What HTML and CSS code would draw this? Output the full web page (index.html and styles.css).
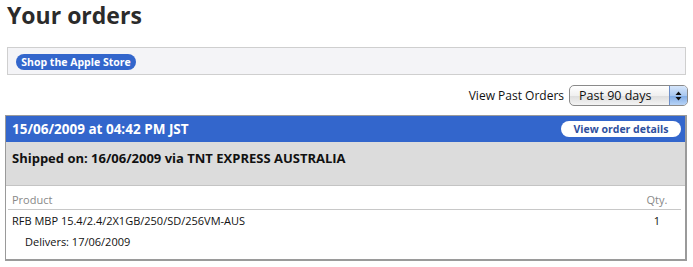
FILE: index.html
```html
<!DOCTYPE html>
<html lang="en">
<head>
  <meta charset="UTF-8">
  <title>Your orders</title>
  <link rel="stylesheet" href="styles.css">
</head>
<body>
  <div class="page">
    <h1>Your orders</h1>

    <div class="shop-bar">
      <a class="pill pill-blue" href="#">Shop the Apple Store</a>
    </div>

    <div class="filter">
      <label for="period">View Past Orders</label>
      <div class="popup" id="period">
        <span class="popup-value">Past 90 days</span>
        <span class="popup-arrows">
          <svg width="7" height="10" viewBox="0 0 7 10">
            <path d="M3.5 0.5 L6.5 4 L0.5 4 Z M0.5 6 L6.5 6 L3.5 9.5 Z" fill="#111"/>
          </svg>
        </span>
      </div>
    </div>

    <div class="order">
      <div class="order-head">
        <span class="order-date">15/06/2009 at 04:42 PM JST</span>
        <a class="pill pill-white" href="#">View order details</a>
      </div>
      <div class="shipment">
        Shipped on: 16/06/2009 via TNT EXPRESS AUSTRALIA
      </div>
      <div class="items">
        <div class="items-head">
          <span>Product</span>
          <span class="qty">Qty.</span>
        </div>
        <div class="item">
          <span>RFB MBP 15.4/2.4/2X1GB/250/SD/256VM-AUS</span>
          <span class="qty">1</span>
        </div>
        <div class="delivers">Delivers: 17/06/2009</div>
      </div>
    </div>
  </div>
</body>
</html>
```

FILE: styles.css
```css
* {
  margin: 0;
  padding: 0;
  box-sizing: border-box;
}

body {
  font-family: "Open Sans", "DejaVu Sans", sans-serif;
  background-color: #ffffff;
  color: #111;
}

.page {
  width: 686px;
  padding-left: 5px;
}

h1 {
  font-size: 23px;
  font-weight: bold;
  color: #2b2b2b;
  line-height: 30px;
  padding-left: 2px;
  margin-bottom: 17px;
}

.shop-bar {
  margin-left: 2px;
  width: 679px;
  height: 28px;
  background-color: #f4f4f7;
  border: 1px solid #cfcfcf;
  display: flex;
  align-items: flex-start;
  padding: 6px 0 0 8px;
}

.pill {
  display: block;
  height: 16px;
  line-height: 16px;
  border-radius: 8px;
  font-size: 10.5px;
  font-weight: bold;
  text-decoration: none;
  text-align: center;
}

.pill-blue {
  width: 120px;
  background-color: #3366cc;
  color: #ffffff;
}

.pill-white {
  width: 120px;
  background-color: #ffffff;
  color: #2d4f9e;
}

.filter {
  display: flex;
  justify-content: flex-end;
  align-items: center;
  gap: 5px;
  margin-top: 10px;
  height: 21px;
  margin-right: -2px;
  font-size: 12px;
}

.filter label {
  color: #111;
}

.popup {
  display: flex;
  width: 119px;
  height: 21px;
  border: 1px solid #8a8a8a;
  border-radius: 5px;
  overflow: hidden;
  font-size: 12.5px;
  background: linear-gradient(#ffffff, #f0f0f0 50%, #dcdcdc 51%, #f4f4f4);
}

.popup-value {
  flex: 1;
  padding-left: 9px;
  line-height: 19px;
}

.popup-arrows {
  width: 18px;
  display: flex;
  align-items: center;
  justify-content: center;
  border-left: 1px solid #6d8fc8;
  background: linear-gradient(#d6e6fb, #a9c8f0 50%, #7fabe6 51%, #b7d3f6);
}

.order {
  margin-top: 9px;
  width: 682px;
  height: 146px;
  border-top: 1px solid #9a9a9a;
  border-left: 1px solid #9a9a9a;
  border-right: 2px solid #9a9a9a;
  border-bottom: 2px solid #9a9a9a;
}

.order-head {
  height: 26px;
  background-color: #3366cc;
  display: flex;
  justify-content: space-between;
  align-items: center;
  padding: 0 4px 0 6px;
}

.order-date {
  color: #ffffff;
  font-size: 13.5px;
  font-weight: bold;
}

.shipment {
  height: 44px;
  background-color: #dcdcdc;
  border-bottom: 1px solid #c4c4c4;
  padding: 7px 0 0 6px;
  font-size: 13px;
  font-weight: bold;
}

.items {
  padding: 6px 4px 0 6px;
  font-size: 11px;
}

.items-head {
  display: flex;
  justify-content: space-between;
  color: #888;
  border-bottom: 1px solid #c8c8c8;
  padding-bottom: 2px;
  margin-left: -4px;
  padding-left: 4px;
}

.items-head .qty,
.item .qty {
  width: 48px;
  text-align: center;
}

.item {
  display: flex;
  justify-content: space-between;
  padding-top: 3px;
}

.delivers {
  padding: 6px 0 0 13px;
}
```
